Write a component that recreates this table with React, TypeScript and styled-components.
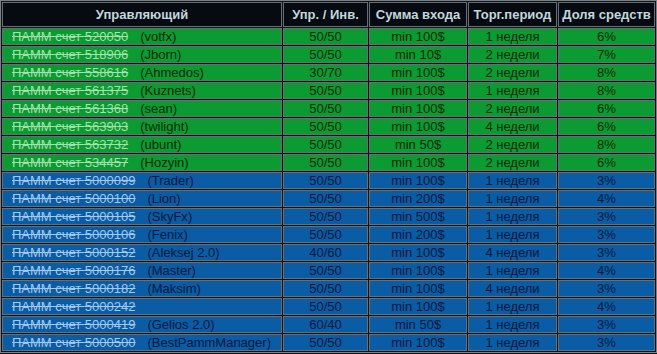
import * as React from 'react';
import styled, { createGlobalStyle } from 'styled-components';

const GlobalStyle = createGlobalStyle`
  html, body {
    margin: 0;
    padding: 0;
    background: #0b1418;
  }
`;

type Tone = 'green' | 'blue';

const palette = {
  green: { bg: '#0c9a32', text: '#062a0c', strike: '#a6e0ae' },
  blue: { bg: '#0a5ca4', text: '#03183a', strike: '#a6c8ee' }
};

const Table = styled.table`
  width: 657px;
  border: 1px solid #7c8084;
  border-spacing: 1px;
  background: #0b1418;
  font-family: 'Liberation Sans', Arial, sans-serif;
  font-size: 13px;
  table-layout: fixed;
`;

const Head = styled.th<{ $w: number }>`
  width: ${props => props.$w}px;
  height: 23px;
  padding: 0;
  border: 1px solid #6a6e72;
  background: #050b10;
  color: #c4d6de;
  font-weight: bold;
  text-align: center;
  white-space: nowrap;
`;

const Cell = styled.td<{ $tone: Tone, $left?: boolean }>`
  height: 15px;
  padding: ${props => (props.$left ? '0 0 0 9px' : '0')};
  border: 1px solid #6a6e72;
  background: ${props => palette[props.$tone].bg};
  color: ${props => palette[props.$tone].text};
  text-align: ${props => (props.$left ? 'left' : 'center')};
  line-height: 15px;
  white-space: nowrap;
  overflow: hidden;
`;

const Account = styled.span<{ $tone: Tone }>`
  color: ${props => palette[props.$tone].strike};
  text-decoration: line-through;
`;

const Nick = styled.span`
  margin-left: 12px;
`;

type Row = [string, string, string, string, string, string, Tone];

const rows: Row[] = [
  ['520050', 'votfx', '50/50', 'min 100$', '1 неделя', '6%', 'green'],
  ['518906', 'Jborn', '50/50', 'min 10$', '2 недели', '7%', 'green'],
  ['558616', 'Ahmedos', '30/70', 'min 100$', '2 недели', '8%', 'green'],
  ['561375', 'Kuznets', '50/50', 'min 100$', '1 неделя', '8%', 'green'],
  ['561368', 'sean', '50/50', 'min 100$', '2 недели', '6%', 'green'],
  ['563903', 'twilight', '50/50', 'min 100$', '4 недели', '6%', 'green'],
  ['563732', 'ubunt', '50/50', 'min 50$', '2 недели', '8%', 'green'],
  ['534457', 'Hozyin', '50/50', 'min 100$', '2 недели', '6%', 'green'],
  ['5000099', 'Trader', '50/50', 'min 100$', '1 неделя', '3%', 'blue'],
  ['5000100', 'Lion', '50/50', 'min 200$', '1 неделя', '4%', 'blue'],
  ['5000105', 'SkyFx', '50/50', 'min 500$', '1 неделя', '3%', 'blue'],
  ['5000106', 'Fenix', '50/50', 'min 200$', '1 неделя', '3%', 'blue'],
  ['5000152', 'Aleksej 2.0', '40/60', 'min 100$', '4 недели', '3%', 'blue'],
  ['5000176', 'Master', '50/50', 'min 100$', '1 неделя', '4%', 'blue'],
  ['5000182', 'Maksim', '50/50', 'min 100$', '4 недели', '3%', 'blue'],
  ['5000242', '', '50/50', 'min 100$', '1 неделя', '4%', 'blue'],
  ['5000419', 'Gelios 2.0', '60/40', 'min 50$', '1 неделя', '3%', 'blue'],
  ['5000500', 'BestPammManager', '50/50', 'min 100$', '1 неделя', '3%', 'blue']
];

const columns: [string, number][] = [
  ['Управляющий', 278],
  ['Упр. / Инв.', 83],
  ['Сумма входа', 96],
  ['Торг.период', 87],
  ['Доля средств', 95]
];

const App = () => (
  <>
    <GlobalStyle />
    <Table>
      <thead>
        <tr>
          {columns.map(([title, w]) => (
            <Head key={title} $w={w}>{title}</Head>
          ))}
        </tr>
      </thead>
      <tbody>
        {rows.map(([acc, nick, share, min, period, part, tone]) => (
          <tr key={acc}>
            <Cell $tone={tone} $left>
              <Account $tone={tone}>ПАММ счет {acc}</Account>
              {nick ? <Nick>({nick})</Nick> : null}
            </Cell>
            <Cell $tone={tone}>{share}</Cell>
            <Cell $tone={tone}>{min}</Cell>
            <Cell $tone={tone}>{period}</Cell>
            <Cell $tone={tone}>{part}</Cell>
          </tr>
        ))}
      </tbody>
    </Table>
  </>
);

export default App;
